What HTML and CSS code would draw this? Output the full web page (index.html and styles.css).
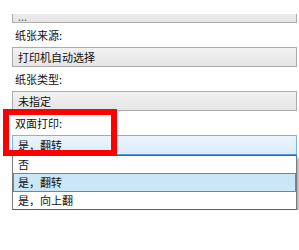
FILE: index.html
```html
<!DOCTYPE html>
<html lang="zh-CN">
<head>
    <meta charset="UTF-8">
    <meta name="viewport" content="width=device-width, initial-scale=1.0">
    <title>打印设置</title>
    <link rel="stylesheet" href="styles.css">
</head>
<body>

    <div class="panel">
        <div class="combo combo-top">...</div>

        <div class="label">纸张来源:</div>
        <div class="combo">打印机自动选择</div>

        <div class="label">纸张类型:</div>
        <div class="combo">未指定</div>

        <div class="label">双面打印:</div>
        <div class="combo combo-open">是，翻转</div>

        <ul class="dropdown">
            <li>否</li>
            <li class="selected">是，翻转</li>
            <li>是，向上翻</li>
        </ul>

        <!-- red annotation frame -->
        <div class="mark"></div>
    </div>

</body>
</html>
```

FILE: styles.css
```css
body {
    margin: 0;
    background-color: #fff;
    font-family: "Noto Sans CJK SC", "Noto Sans", sans-serif;
    font-size: 11px;
    color: #111;
}

.panel {
    position: relative;
    padding: 14px 2px 0 12px;
}

.combo {
    box-sizing: border-box;
    height: 20px;
    line-height: 18px;
    padding: 0 5px;
    border: 1px solid #acacac;
    background: linear-gradient(#f2f2f2, #e5e5e5);
}

/* only the lower edge of the first box is in view */
.combo-top {
    height: 9px;
    line-height: 4px;
    border-top: none;
    color: #555;
    background: linear-gradient(#ebebeb, #e5e5e5);
}

.combo-open {
    border-color: #7eb4ea;
    border-bottom-color: #569de5;
    background: linear-gradient(#ecf4fc, #dcecfc);
}

.label {
    height: 24px;
    line-height: 24px;
    padding-left: 3px;
}

.dropdown {
    list-style: none;
    margin: 0;
    padding: 0;
    border: 1px solid #7a7a7a;
    border-top-color: #5a5a5a;
    border-bottom-color: #5a5a5a;
    background-color: #fff;
    box-shadow: 2px 3px 3px rgba(0, 0, 0, 0.35);
}

.dropdown li {
    height: 17px;
    line-height: 17px;
    padding: 0 5px;
}

.dropdown li.selected {
    padding: 0 4px;
    border: 1px solid #26a0da;
    background-color: #cbe6f6;
}

.mark {
    position: absolute;
    left: 3px;
    top: 109px;
    box-sizing: border-box;
    width: 114px;
    height: 47px;
    border: 6px solid #ff0000;
}
```
